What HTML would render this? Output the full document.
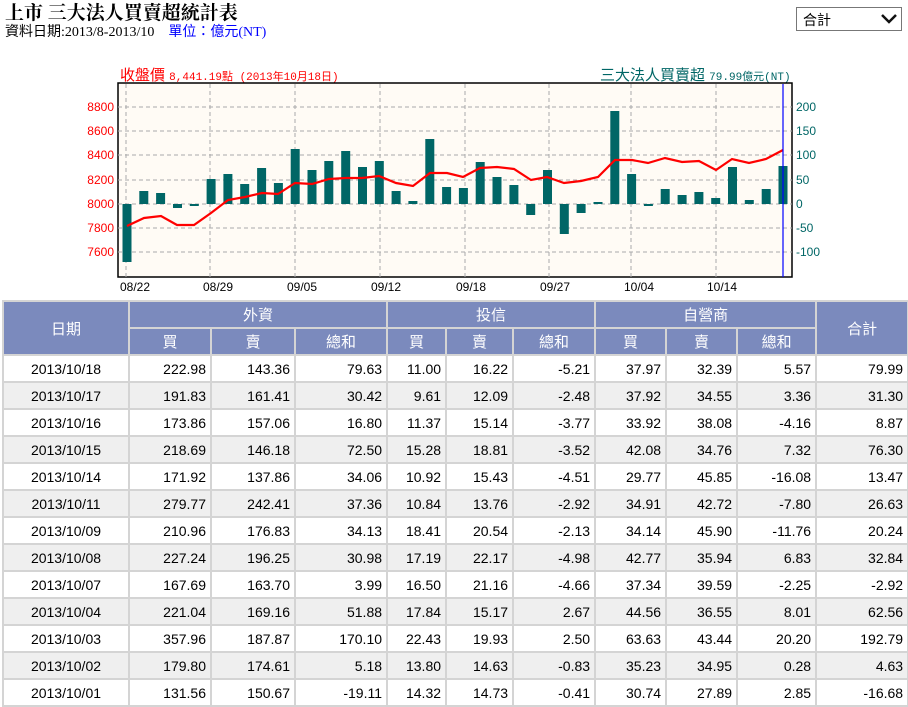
<!DOCTYPE html>
<html><head><meta charset="utf-8"><style>
body{margin:0;background:#fff;font-family:"Liberation Sans","Noto Sans CJK TC",sans-serif;width:908px;height:707px;overflow:hidden;position:relative}
.t1{position:absolute;left:5px;top:-2px;font-size:19px;font-weight:bold;color:#000;font-family:"Liberation Serif","Noto Serif CJK SC",serif}
.t2{position:absolute;left:5px;top:21px;font-size:14px;color:#000;font-family:"Liberation Serif","Noto Sans CJK TC",serif}
.t2 span{color:#00f;margin-left:14px}
.sel{position:absolute;left:796px;top:7px;width:106px;height:24px;border:1px solid #777;box-sizing:border-box;font-size:14px;padding:2px 6px;color:#000}
table{position:absolute;left:2px;top:300px;border-collapse:collapse;width:905px;font-size:14px;table-layout:fixed}
td,th{border:2px solid #d4d4d4;height:25px;padding:0 4px;box-sizing:border-box}
tr{height:27px}
th{background:#7b8abd;color:#fff;font-weight:normal;font-size:15px}
td{text-align:right;color:#000}
td:first-child{text-align:center}
tr.g td{background:#efefef}
</style></head><body>
<div class="t1">上市 三大法人買賣超統計表</div>
<div class="t2">資料日期:2013/8-2013/10<span>單位：億元(NT)</span></div>
<div class="sel">合計<svg style="position:absolute;right:4px;top:6px" width="16" height="10"><path d="M1 1 L8 8 L15 1" stroke="#111" stroke-width="2.5" fill="none"/></svg></div>
<svg style="position:absolute;left:0;top:0" width="908" height="300" font-family="Liberation Mono,monospace">
<text x="120" y="80" fill="#f00" font-size="15" font-family="Liberation Sans,Noto Sans CJK TC,sans-serif">收盤價 <tspan font-size="11" font-family="Liberation Mono,Noto Sans CJK TC,monospace">8,441.19點 (2013年10月18日)</tspan></text>
<text x="600" y="80" fill="#066" font-size="15" font-family="Liberation Sans,Noto Sans CJK TC,sans-serif">三大法人買賣超 <tspan font-size="11" font-family="Liberation Mono,Noto Sans CJK TC,monospace">79.99億元(NT)</tspan></text>
<rect x="118" y="83" width="674" height="194" fill="#fffbf5" stroke="#000" stroke-width="1.5"/>
<g stroke="#aaa" stroke-dasharray="4,3" stroke-width="1">
<line x1="118" x2="792" y1="107" y2="107"/><line x1="118" x2="792" y1="131" y2="131"/><line x1="118" x2="792" y1="155" y2="155"/><line x1="118" x2="792" y1="180" y2="180"/><line x1="118" x2="792" y1="204" y2="204"/><line x1="118" x2="792" y1="228" y2="228"/><line x1="118" x2="792" y1="252" y2="252"/>
<line x1="126" x2="126" y1="84" y2="277"/><line x1="210" x2="210" y1="84" y2="277"/><line x1="295" x2="295" y1="84" y2="277"/><line x1="380" x2="380" y1="84" y2="277"/><line x1="465" x2="465" y1="84" y2="277"/><line x1="549" x2="549" y1="84" y2="277"/><line x1="631" x2="631" y1="84" y2="277"/><line x1="716" x2="716" y1="84" y2="277"/>
</g>
<g fill="#006666">
<rect x="122.5" y="204" width="9" height="58"/>
<rect x="139.3" y="191" width="9" height="13"/>
<rect x="156.1" y="193" width="9" height="11"/>
<rect x="173" y="204" width="9" height="4"/>
<rect x="189.8" y="204" width="9" height="2"/>
<rect x="206.6" y="179" width="9" height="25"/>
<rect x="223.4" y="174" width="9" height="30"/>
<rect x="240.2" y="184" width="9" height="20"/>
<rect x="257.1" y="168" width="9" height="36"/>
<rect x="273.9" y="183" width="9" height="21"/>
<rect x="290.7" y="149" width="9" height="55"/>
<rect x="307.5" y="170" width="9" height="34"/>
<rect x="324.3" y="161" width="9" height="43"/>
<rect x="341.2" y="151" width="9" height="53"/>
<rect x="358" y="167" width="9" height="37"/>
<rect x="374.8" y="161" width="9" height="43"/>
<rect x="391.6" y="191" width="9" height="13"/>
<rect x="408.4" y="201" width="9" height="3"/>
<rect x="425.3" y="139" width="9" height="65"/>
<rect x="442.1" y="187" width="9" height="17"/>
<rect x="458.9" y="188" width="9" height="16"/>
<rect x="475.7" y="162" width="9" height="42"/>
<rect x="492.5" y="177" width="9" height="27"/>
<rect x="509.4" y="185" width="9" height="19"/>
<rect x="526.2" y="204" width="9" height="11"/>
<rect x="543" y="170" width="9" height="34"/>
<rect x="559.8" y="204" width="9" height="30"/>
<rect x="576.6" y="204" width="9" height="9"/>
<rect x="593.5" y="202" width="9" height="2"/>
<rect x="610.3" y="111" width="9" height="93"/>
<rect x="627.1" y="174" width="9" height="30"/>
<rect x="643.9" y="204" width="9" height="2"/>
<rect x="660.7" y="189" width="9" height="15"/>
<rect x="677.6" y="195" width="9" height="9"/>
<rect x="694.4" y="192" width="9" height="12"/>
<rect x="711.2" y="198" width="9" height="6"/>
<rect x="728" y="167" width="9" height="37"/>
<rect x="744.8" y="200" width="9" height="4"/>
<rect x="761.7" y="189" width="9" height="15"/>
<rect x="778.5" y="166" width="9" height="38"/>
</g>
<polyline fill="none" stroke="#f00" stroke-width="2.2" points="127,226 144,218 161,216 177,225 194,225 211,213 228,200 245,197 262,193 278,194 295,183 312,184 329,179 346,178 362,178 379,176 396,183 413,186 430,173 447,173 463,177 480,168 497,167 514,169 531,180 547,177 564,183 581,181 598,177 615,160 632,160 648,163 665,158 682,162 699,161 716,170 732,159 749,163 766,159 783,150"/>
<line x1="783" x2="783" y1="84" y2="277" stroke="#00f" stroke-width="1.2"/>
<g fill="#f00" font-size="12" text-anchor="end" font-family="Liberation Sans,sans-serif">
<text x="114" y="111">8800</text><text x="114" y="135">8600</text><text x="114" y="159">8400</text><text x="114" y="184">8200</text><text x="114" y="208">8000</text><text x="114" y="232">7800</text><text x="114" y="256">7600</text>
</g>
<g fill="#066" font-size="12" font-family="Liberation Sans,sans-serif">
<text x="796" y="111">200</text><text x="796" y="135">150</text><text x="796" y="159">100</text><text x="796" y="184">50</text><text x="796" y="208">0</text><text x="796" y="232">-50</text><text x="796" y="256">-100</text>
</g>
<g fill="#000" font-size="12" text-anchor="middle" font-family="Liberation Sans,sans-serif">
<text x="135" y="291">08/22</text><text x="218" y="291">08/29</text><text x="302" y="291">09/05</text><text x="386" y="291">09/12</text><text x="471" y="291">09/18</text><text x="555" y="291">09/27</text><text x="639" y="291">10/04</text><text x="722" y="291">10/14</text>
</g>
</svg>
<table>
<colgroup><col style="width:126px"><col style="width:82px"><col style="width:84px"><col style="width:92px"><col style="width:59px"><col style="width:67px"><col style="width:82px"><col style="width:71px"><col style="width:71px"><col style="width:79px"><col style="width:92px"></colgroup>
<tr><th rowspan="2">日期</th><th colspan="3">外資</th><th colspan="3">投信</th><th colspan="3">自營商</th><th rowspan="2">合計</th></tr>
<tr><th>買</th><th>賣</th><th>總和</th><th>買</th><th>賣</th><th>總和</th><th>買</th><th>賣</th><th>總和</th></tr>
<tr><td>2013/10/18</td><td>222.98</td><td>143.36</td><td>79.63</td><td>11.00</td><td>16.22</td><td>-5.21</td><td>37.97</td><td>32.39</td><td>5.57</td><td>79.99</td></tr>
<tr class="g"><td>2013/10/17</td><td>191.83</td><td>161.41</td><td>30.42</td><td>9.61</td><td>12.09</td><td>-2.48</td><td>37.92</td><td>34.55</td><td>3.36</td><td>31.30</td></tr>
<tr><td>2013/10/16</td><td>173.86</td><td>157.06</td><td>16.80</td><td>11.37</td><td>15.14</td><td>-3.77</td><td>33.92</td><td>38.08</td><td>-4.16</td><td>8.87</td></tr>
<tr class="g"><td>2013/10/15</td><td>218.69</td><td>146.18</td><td>72.50</td><td>15.28</td><td>18.81</td><td>-3.52</td><td>42.08</td><td>34.76</td><td>7.32</td><td>76.30</td></tr>
<tr><td>2013/10/14</td><td>171.92</td><td>137.86</td><td>34.06</td><td>10.92</td><td>15.43</td><td>-4.51</td><td>29.77</td><td>45.85</td><td>-16.08</td><td>13.47</td></tr>
<tr class="g"><td>2013/10/11</td><td>279.77</td><td>242.41</td><td>37.36</td><td>10.84</td><td>13.76</td><td>-2.92</td><td>34.91</td><td>42.72</td><td>-7.80</td><td>26.63</td></tr>
<tr><td>2013/10/09</td><td>210.96</td><td>176.83</td><td>34.13</td><td>18.41</td><td>20.54</td><td>-2.13</td><td>34.14</td><td>45.90</td><td>-11.76</td><td>20.24</td></tr>
<tr class="g"><td>2013/10/08</td><td>227.24</td><td>196.25</td><td>30.98</td><td>17.19</td><td>22.17</td><td>-4.98</td><td>42.77</td><td>35.94</td><td>6.83</td><td>32.84</td></tr>
<tr><td>2013/10/07</td><td>167.69</td><td>163.70</td><td>3.99</td><td>16.50</td><td>21.16</td><td>-4.66</td><td>37.34</td><td>39.59</td><td>-2.25</td><td>-2.92</td></tr>
<tr class="g"><td>2013/10/04</td><td>221.04</td><td>169.16</td><td>51.88</td><td>17.84</td><td>15.17</td><td>2.67</td><td>44.56</td><td>36.55</td><td>8.01</td><td>62.56</td></tr>
<tr><td>2013/10/03</td><td>357.96</td><td>187.87</td><td>170.10</td><td>22.43</td><td>19.93</td><td>2.50</td><td>63.63</td><td>43.44</td><td>20.20</td><td>192.79</td></tr>
<tr class="g"><td>2013/10/02</td><td>179.80</td><td>174.61</td><td>5.18</td><td>13.80</td><td>14.63</td><td>-0.83</td><td>35.23</td><td>34.95</td><td>0.28</td><td>4.63</td></tr>
<tr><td>2013/10/01</td><td>131.56</td><td>150.67</td><td>-19.11</td><td>14.32</td><td>14.73</td><td>-0.41</td><td>30.74</td><td>27.89</td><td>2.85</td><td>-16.68</td></tr>
</table>
</body></html>
